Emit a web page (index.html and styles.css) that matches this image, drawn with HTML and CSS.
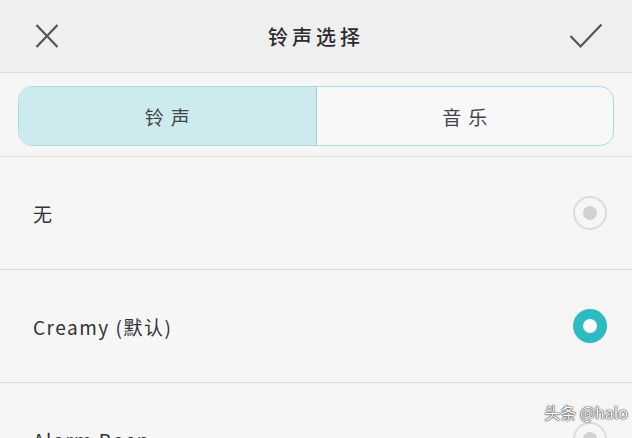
FILE: index.html
```html
<!DOCTYPE html>
<html lang="zh-CN">
<head>
    <meta charset="UTF-8">
    <meta name="viewport" content="width=device-width, initial-scale=1.0">
    <title>铃声选择</title>
    <link rel="stylesheet" href="styles.css">
</head>
<body>
    <div class="app">
        <header class="topbar">
            <span class="icon-btn">
                <svg width="24" height="26" viewBox="0 0 24 26">
                    <path d="M1.5 2 L22.5 24 M22.5 2 L1.5 24" stroke="#555" stroke-width="2.2" fill="none"/>
                </svg>
            </span>
            <h1>铃声选择</h1>
            <span class="icon-btn">
                <svg width="34" height="26" viewBox="0 0 34 26">
                    <path d="M1.5 13 L11.5 23.5 L32.5 1.5" stroke="#555" stroke-width="2.2" fill="none"/>
                </svg>
            </span>
        </header>

        <div class="tabs-wrap">
            <div class="tabs">
                <div class="tab active">铃声</div>
                <div class="tab">音乐</div>
            </div>
        </div>

        <ul class="list">
            <li class="row">
                <span class="label">无</span>
                <span class="radio"></span>
            </li>
            <li class="row">
                <span class="label">Creamy (默认)</span>
                <span class="radio checked"></span>
            </li>
            <li class="row">
                <span class="label">Alarm Beep</span>
                <span class="radio"></span>
            </li>
        </ul>

        <div class="watermark">头条 @halo</div>
    </div>
</body>
</html>
```

FILE: styles.css
```css
body {
    margin: 0;
    background: #fff;
    font-family: "Noto Sans CJK SC", "Noto Sans", sans-serif;
    color: #333;
    overflow: hidden;
}
.app {
    position: relative;
    width: 632px;
    height: 438px;
    background: #f6f6f6;
    overflow: hidden;
}
.topbar {
    height: 72px;
    background: #efefef;
    border-bottom: 1px solid #dedede;
    display: flex;
    align-items: center;
    justify-content: space-between;
    padding: 0 29px 0 35px;
}
.topbar h1 {
    margin: 0 0 0 4px;
    font-size: 20px;
    font-weight: 500;
    letter-spacing: 4px;
    color: #2c2c2c;
}
.icon-btn {
    display: flex;
}
.tabs-wrap {
    padding: 13px 18px 10px;
    border-bottom: 1px solid #dedede;
}
.tabs {
    display: flex;
    height: 58px;
    border: 1px solid #a6dbe0;
    border-radius: 14px;
    overflow: hidden;
    background: #f8f8f8;
}
.tab {
    flex: 1;
    display: flex;
    align-items: center;
    justify-content: center;
    font-size: 19px;
    letter-spacing: 7px;
    padding-left: 7px;
    color: #444;
}
.tab.active {
    background: #cdebee;
    border-right: 1px solid #93d0d6;
}
.list {
    list-style: none;
    margin: 0;
    padding: 0;
}
.row {
    height: 112px;
    border-bottom: 1px solid #dedede;
    display: flex;
    align-items: center;
    justify-content: space-between;
    padding: 0 25px 0 33px;
}
.label {
    font-size: 19px;
    letter-spacing: 1.5px;
    color: #333;
}
.radio {
    width: 34px;
    height: 34px;
    border: 2px solid #dcdcdc;
    border-radius: 50%;
    display: flex;
    align-items: center;
    justify-content: center;
    box-sizing: border-box;
}
.radio::after {
    content: "";
    width: 14px;
    height: 14px;
    border-radius: 50%;
    background: #d2d2d2;
}
.radio.checked {
    border: none;
    background: #2bbcc1;
}
.radio.checked::after {
    width: 14px;
    height: 14px;
    background: #fff;
}
.watermark {
    position: absolute;
    right: 4px;
    bottom: 14px;
    font-size: 16px;
    color: #fff;
    text-shadow: 0 0 1px #333, 0 0 1px #333, 0 0 2px #666;
}
```
